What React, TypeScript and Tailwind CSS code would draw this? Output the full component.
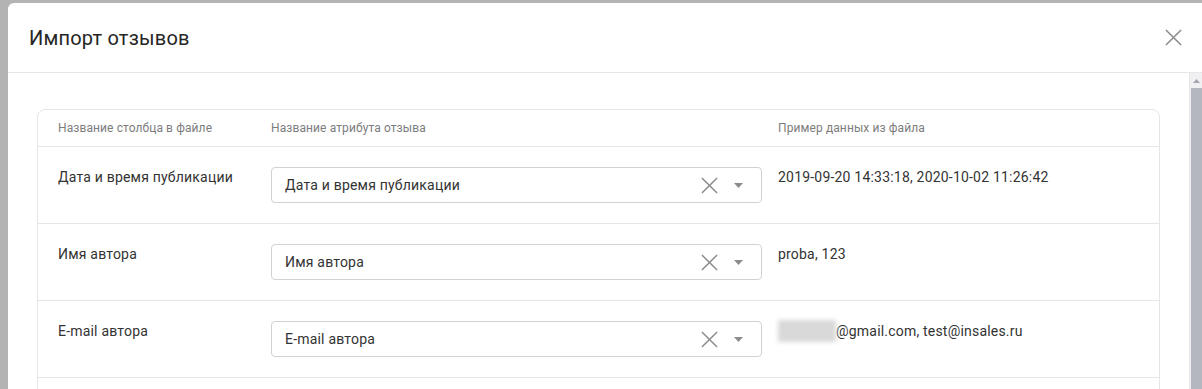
import React from "react";

const rows = [
  { name: "Дата и время публикации", attr: "Дата и время публикации", sample: "2019-09-20 14:33:18, 2020-10-02 11:26:42" },
  { name: "Имя автора", attr: "Имя автора", sample: "proba, 123" },
  { name: "E-mail автора", attr: "E-mail автора", sample: "@gmail.com, test@insales.ru", hidden: true },
];

function Cross({ size = 18, className = "" }: { size?: number; className?: string }) {
  return (
    <svg width={size} height={size} viewBox="0 0 18 18" className={className}>
      <path d="M1 1L17 17M17 1L1 17" stroke="currentColor" strokeWidth="1.6" fill="none" />
    </svg>
  );
}

function AttrSelect({ value }: { value: string }) {
  return (
    <div className="flex items-center h-[36px] w-[491px] border border-[#d2d2d2] rounded-[4px] bg-white pl-[13px] pr-[18px]">
      <span className="flex-1 text-[14px] text-[#333]">{value}</span>
      <Cross size={17} className="text-[#8c8c8c]" />
      <svg width="9" height="5" viewBox="0 0 9 5" className="ml-[16px] text-[#8c8c8c]">
        <path d="M0 0H9L4.5 5Z" fill="currentColor" />
      </svg>
    </div>
  );
}

export default function App() {
  return (
    <div className="w-[1202px] h-[389px] overflow-hidden bg-[#b3b3b3] pt-[3px] pl-[8px]" style={{ fontFamily: "Roboto, 'Liberation Sans', sans-serif" }}>
      <div className="bg-white rounded-tl-[6px] h-full flex flex-col">
        <div className="h-[70px] shrink-0 flex items-center justify-between border-b border-[#e6e6e6] pl-[21px] pr-[20px]">
          <h1 className="text-[20px] tracking-[0.2px] text-[#262626] font-normal">Импорт отзывов</h1>
          <Cross size={17} className="text-[#8a8a8a]" />
        </div>
        <div className="flex flex-1 min-h-0">
          <div className="flex-1 pt-[36px] px-[29px]">
            <div className="border border-[#e6e6e6] rounded-[8px]">
              <div className="grid grid-cols-[233px_507px_1fr] h-[37px] items-center border-b border-[#e6e6e6] text-[12px] tracking-[0.1px] text-[#7d7d7d]">
                <span className="pl-[20px]">Название столбца в файле</span>
                <span>Название атрибута отзыва</span>
                <span>Пример данных из файла</span>
              </div>
              {rows.map((r) => (
                <div key={r.name} className="grid grid-cols-[233px_507px_1fr] h-[77px] pt-[20px] border-b border-[#e6e6e6] text-[14px] tracking-[0.2px] leading-[20px] text-[#333]">
                  <span className="pl-[20px]">{r.name}</span>
                  <AttrSelect value={r.attr} />
                  <span className="flex items-start">
                    {r.hidden && <span className="inline-block w-[58px] h-[22px] -mt-[1px] bg-[#d9d9d9] blur-[2px]" />}
                    {r.sample}
                  </span>
                </div>
              ))}
              <div className="h-[40px]" />
            </div>
          </div>
          <div className="w-[13px] shrink-0 flex flex-col bg-[#f0f0f2] border-l border-[#e6e6e6]">
            <div className="h-[15px] flex items-center justify-center">
              <svg width="7" height="4" viewBox="0 0 7 4"><path d="M0 4L3.5 0L7 4Z" fill="#a5a7b0" /></svg>
            </div>
            <div className="flex-1 ml-[1px] bg-[#b4b6c0]" />
          </div>
        </div>
      </div>
    </div>
  );
}
